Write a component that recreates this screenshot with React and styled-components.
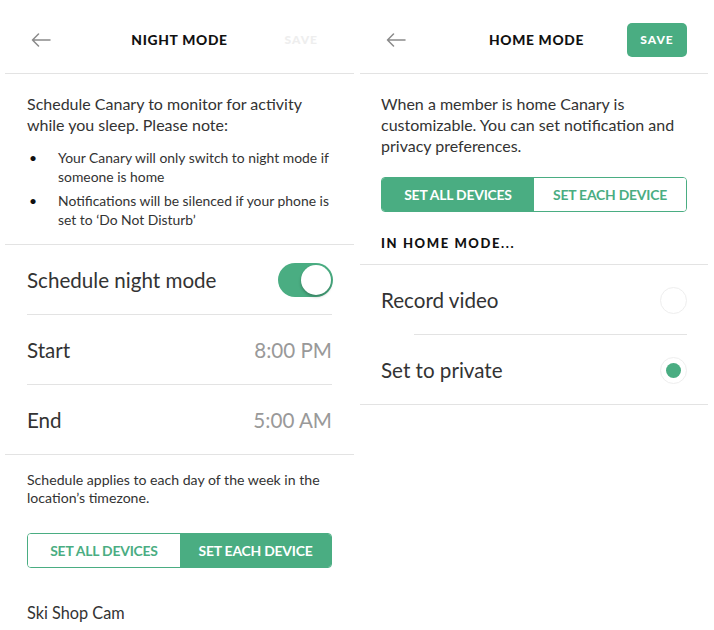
import React from "react";
import styled, { createGlobalStyle } from "styled-components";

const green = "#4aad82";

const Global = createGlobalStyle`
  html, body { margin: 0; padding: 0; background: #fff; }
  body { font-family: Lato, "Open Sans", sans-serif; color: #333; -webkit-font-smoothing: antialiased; }
`;

const Page = styled.div`
  width: 714px;
  height: 630px;
  overflow: hidden;
  display: flex;
  gap: 6px;
  padding: 0 6px 0 5px;
  box-sizing: border-box;
  background: #fff;
`;

const Panel = styled.div`
  flex: 0 0 ${(p) => p.$w}px;
  display: flex;
  flex-direction: column;
`;

const Header = styled.div`
  height: 74px;
  border-bottom: 1px solid #e3e3e3;
  box-sizing: border-box;
  display: grid;
  grid-template-columns: 1fr auto 1fr;
  align-items: center;
  padding: 6px ${(p) => p.$pr}px 0 ${(p) => p.$pl}px;
`;

const Back = styled.div`
  display: flex;
  align-items: center;
  color: #8a8a8a;
`;

const Title = styled.div`
  font-weight: 900;
  font-size: 13.8px;
  letter-spacing: 0.7px;
  color: #111;
  text-align: center;
`;

const SaveWrap = styled.div`
  display: flex;
  justify-content: flex-end;
`;

const Save = styled.div`
  width: ${(p) => (p.$active ? "60px" : "auto")};
  height: 34px;
  border-radius: 5px;
  background: ${(p) => (p.$active ? green : "transparent")};
  color: ${(p) => (p.$active ? "#fff" : "#eeeeee")};
  font-weight: 900;
  font-size: 12px;
  letter-spacing: 1px;
  display: flex;
  align-items: center;
  justify-content: center;
  margin-right: ${(p) => (p.$active ? "0" : "10px")};
`;

const Section = styled.div`
  padding: ${(p) => p.$pad};
  border-bottom: ${(p) => (p.$border ? "1px solid #e3e3e3" : "none")};
`;

const Para = styled.p`
  margin: 0;
  font-size: 16px;
  line-height: 20.8px;
  color: #333;
`;

const List = styled.ul`
  list-style: none;
  margin: 12px 0 0;
  padding: 0;
  display: flex;
  flex-direction: column;
  gap: 5px;
`;

const Item = styled.li`
  display: grid;
  grid-template-columns: 31px 1fr;
  font-size: 13.9px;
  line-height: 19px;
  color: #333;
  &::before {
    content: "•";
    padding-left: 2px;
    color: #111;
  }
`;

const Row = styled.div`
  height: 70px;
  box-sizing: border-box;
  display: flex;
  align-items: center;
  justify-content: space-between;
  padding: 0 ${(p) => p.$pr}px 0 ${(p) => p.$pl}px;
  position: relative;
  &::after {
    content: "";
    position: absolute;
    bottom: 0;
    height: 1px;
    background: #e3e3e3;
    left: ${(p) => p.$lineL}px;
    right: ${(p) => p.$lineR}px;
  }
`;

const RowLabel = styled.span`
  font-size: 20.6px;
  color: #333;
`;

const RowValue = styled.span`
  font-size: 20.6px;
  color: #999;
`;

const Toggle = styled.div`
  width: 55px;
  height: 34px;
  border-radius: 17px;
  background: ${green};
  position: relative;
  margin-top: 1px;
  &::after {
    content: "";
    position: absolute;
    top: 2px;
    right: 2px;
    width: 30px;
    height: 30px;
    border-radius: 50%;
    background: #fff;
    box-shadow: 0 2px 3px rgba(0, 0, 0, 0.25);
  }
`;

const Radio = styled.div`
  width: 25px;
  height: 25px;
  border-radius: 50%;
  border: 1.5px solid #eee;
  display: flex;
  align-items: center;
  justify-content: center;
  &::after {
    content: "";
    width: 15px;
    height: 15px;
    border-radius: 50%;
    background: ${(p) => (p.$on ? green : "transparent")};
  }
`;

const Small = styled.p`
  margin: 0;
  font-size: 14.1px;
  line-height: 18px;
  color: #333;
`;

const Segmented = styled.div`
  display: grid;
  grid-template-columns: ${(p) => p.$cols};
  height: 35px;
  border: 1.5px solid ${green};
  border-radius: 4px;
  overflow: hidden;
  box-sizing: border-box;
  margin: ${(p) => p.$margin};
`;

const Seg = styled.div`
  display: flex;
  align-items: center;
  justify-content: center;
  background: ${(p) => (p.$on ? green : "#fff")};
  color: ${(p) => (p.$on ? "#fff" : green)};
  font-weight: 700;
  font-size: 13.9px;
  letter-spacing: -0.2px;
`;

const Device = styled.div`
  font-size: 16.3px;
  color: #333;
  padding: 35px 0 0 22px;
`;

const Caps = styled.div`
  font-weight: 900;
  font-size: 13px;
  letter-spacing: 1.6px;
  color: #111;
  padding: 0 21px 13px;
  border-bottom: 1px solid #e3e3e3;
`;

const Arrow = () => (
  <svg width="20" height="14" viewBox="0 0 20 14" fill="none" stroke="#8a8a8a" strokeWidth="1.5" strokeLinecap="round" strokeLinejoin="round">
    <path d="M19 7H1.5M7.5 1L1.5 7l6 6" />
  </svg>
);

export default function App() {
  return (
    <>
      <Global />
      <Page>
        <Panel $w={349}>
          <Header $pl={26} $pr={26}>
            <Back><Arrow /></Back>
            <Title>NIGHT MODE</Title>
            <SaveWrap><Save>SAVE</Save></SaveWrap>
          </Header>
          <Section $pad="20px 22px 15px" $border>
            <Para>
              Schedule Canary to monitor for activity while you sleep. Please note:
            </Para>
            <List>
              <Item><span>Your Canary will only switch to night mode if someone is home</span></Item>
              <Item><span>Notifications will be silenced if your phone is set to ‘Do Not Disturb’</span></Item>
            </List>
          </Section>
          <Row $pl={22} $pr={21} $lineL={22} $lineR={22}>
            <RowLabel>Schedule night mode</RowLabel>
            <Toggle />
          </Row>
          <Row $pl={22} $pr={22} $lineL={22} $lineR={22}>
            <RowLabel>Start</RowLabel>
            <RowValue>8:00 PM</RowValue>
          </Row>
          <Row $pl={22} $pr={22} $lineL={0} $lineR={0}>
            <RowLabel>End</RowLabel>
            <RowValue>5:00 AM</RowValue>
          </Row>
          <Section $pad="16px 22px 0">
            <Small>Schedule applies to each day of the week in the location’s timezone.</Small>
            <Segmented $cols="152px 1fr" $margin="26px 0 0">
              <Seg>SET ALL DEVICES</Seg>
              <Seg $on>SET EACH DEVICE</Seg>
            </Segmented>
          </Section>
          <Device>Ski Shop Cam</Device>
        </Panel>
        <Panel $w={348}>
          <Header $pl={26} $pr={21}>
            <Back><Arrow /></Back>
            <Title>HOME MODE</Title>
            <SaveWrap><Save $active>SAVE</Save></SaveWrap>
          </Header>
          <Section $pad="20px 21px 0">
            <Para>
              When a member is home Canary is customizable. You can set notification and privacy preferences.
            </Para>
            <Segmented $cols="152px 1fr" $margin="21px 0 0">
              <Seg $on>SET ALL DEVICES</Seg>
              <Seg>SET EACH DEVICE</Seg>
            </Segmented>
          </Section>
          <Section $pad="23px 0 0">
            <Caps>IN HOME MODE...</Caps>
          </Section>
          <Row $pl={21} $pr={21} $lineL={54} $lineR={21}>
            <RowLabel>Record video</RowLabel>
            <Radio />
          </Row>
          <Row $pl={21} $pr={21} $lineL={0} $lineR={0}>
            <RowLabel>Set to private</RowLabel>
            <Radio $on />
          </Row>
        </Panel>
      </Page>
    </>
  );
}
